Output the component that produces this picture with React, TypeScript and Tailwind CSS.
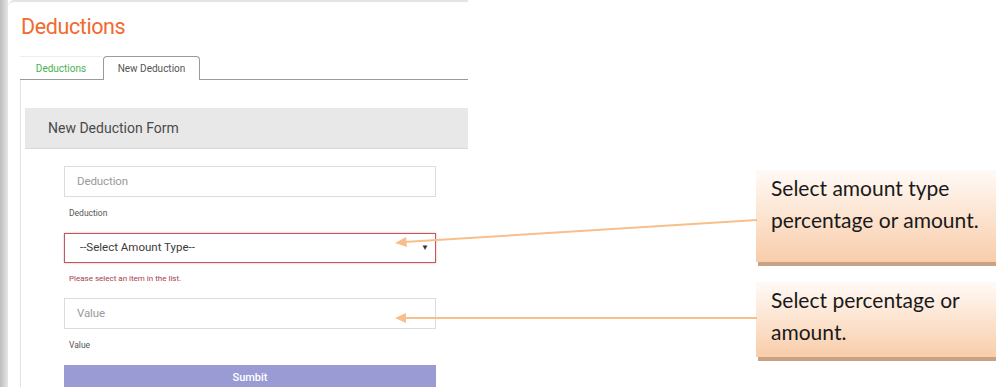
const roboto = { fontFamily: "Roboto, 'Liberation Sans', sans-serif" };

function Field({ placeholder, label }: { placeholder: string; label: string }) {
  return (
    <div className="flex flex-col">
      <div className="h-[31px] w-[372px] border border-[#dcdcdc] bg-white flex items-center pl-[12px] text-[11.5px] tracking-[-0.1px] text-[#9a9a9a]">
        {placeholder}
      </div>
      <div className="h-[36px] pl-[5px] pt-[10px] text-[8.5px] text-[#555]">{label}</div>
    </div>
  );
}

function Callout({ lines, height }: { lines: string[]; height: string }) {
  return (
    <div className="flex flex-col">
      <div
        className={`w-[240px] ${height} bg-gradient-to-b from-[#fffaf6] to-[#f8cdaa] pl-[15px] pt-[2px] text-[21px] leading-[32px] text-[#1a1a1a]`}
        style={{ fontFamily: "Lato, 'Liberation Sans', sans-serif" }}
      >
        {lines.map((l) => (
          <div key={l}>{l}</div>
        ))}
      </div>
      <div className="ml-[2px] h-[4px] w-[238px] bg-[#c9a184]" />
    </div>
  );
}

export default function App() {
  return (
    <div className="relative flex h-[387px] w-[996px] overflow-hidden bg-white" style={roboto}>
      {/* screenshot panel */}
      <div className="flex h-full w-[468px] shrink-0">
        <div className="h-full w-[8px] bg-gradient-to-r from-[#bdbdbd] to-[#e6e6e6]" />
        <div className="flex flex-1 flex-col rounded-tl-[6px] border-t-2 border-[#e4e4e4] bg-white">
          <h1 className="pl-[13px] pt-[9px] text-[21.5px] leading-[32px] tracking-[-0.4px] text-[#f26a2e]">Deductions</h1>
          <div className="ml-[12px] mt-[14px] flex h-[23px] items-end border-b border-[#9a9a9a]">
            <div className="flex h-[23px] w-[82px] items-center justify-center border-t border-[#eeeeee] text-[10px] text-[#4cb050]">
              Deductions
            </div>
            <div className="-mb-px ml-[1px] flex h-[24px] w-[97px] items-center justify-center rounded-t-[4px] border border-b-0 border-[#9a9a9a] bg-white text-[10px] text-[#555]">
              New Deduction
            </div>
          </div>
          <div className="ml-[12px] flex flex-1 flex-col border-l border-[#e2e2e2] pl-[4px] pt-[28px]">
            <div className="flex h-[41px] items-center border-b border-[#d8d8d8] bg-[#e8e8e8] pl-[23px] text-[14px] text-[#4a4a4a]">
              New Deduction Form
            </div>
            <div className="flex flex-col pl-[39px] pt-[17px]">
              <Field placeholder="Deduction" label="Deduction" />
              <div className="flex h-[30px] w-[372px] items-center justify-between border border-[#c0585c] bg-white pl-[15px] pr-[6px] text-[11.5px] text-[#3c3c3c] shadow-[0_0_2px_rgba(192,88,92,0.5)]">
                <span>--Select Amount Type--</span>
                <span className="text-[8px] text-[#333]">▼</span>
              </div>
              <div className="h-[35px] pl-[5px] pt-[10px] text-[8px] text-[#a3424c]">
                Please select an item in the list.
              </div>
              <Field placeholder="Value" label="Value" />
              <div className="flex h-[26px] w-[372px] items-center justify-center bg-[#9a9ad4] text-[11px] font-medium text-white">
                Sumbit
              </div>
            </div>
          </div>
        </div>
      </div>

      {/* callouts */}
      <div className="flex flex-1 flex-col items-end pt-[170px]">
        <Callout lines={["Select amount type", "percentage or amount."]} height="h-[92px]" />
        <div className="h-[16px]" />
        <Callout lines={["Select percentage or", "amount."]} height="h-[75px]" />
      </div>

      {/* arrows */}
      <svg className="pointer-events-none absolute left-0 top-0" width="996" height="387">
        <g stroke="#f8bf8c" strokeWidth="2" fill="#f8bf8c">
          <line x1="757" y1="220" x2="404" y2="242" />
          <polygon points="395,243 406,237 407,247" stroke="none" />
          <line x1="757" y1="318" x2="404" y2="318" />
          <polygon points="395,318 406,313 406,323" stroke="none" />
        </g>
      </svg>
    </div>
  );
}
